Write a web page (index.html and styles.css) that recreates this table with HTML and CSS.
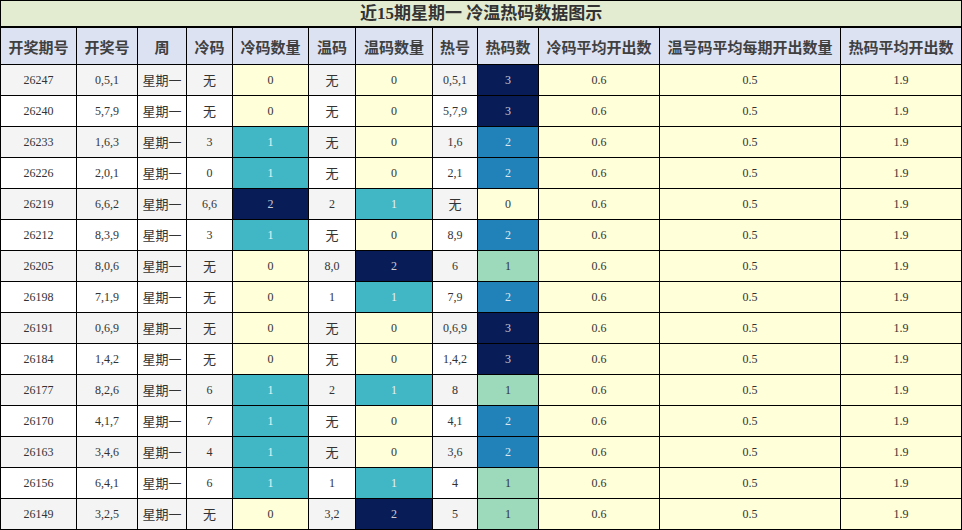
FILE: index.html
```html
<!DOCTYPE html>
<html lang="zh">
<head>
<meta charset="utf-8">
<title>近15期星期一 冷温热码数据图示</title>
<link rel="stylesheet" href="styles.css">
</head>
<body>
<table class="grid">
<colgroup>
<col class="c1"><col class="c2"><col class="c3"><col class="c4"><col class="c5"><col class="c6"><col class="c7"><col class="c8"><col class="c9"><col class="c10"><col class="c11"><col class="c12">
</colgroup>
<thead>
<tr class="title-row"><th colspan="12">近15期星期一 冷温热码数据图示</th></tr>
<tr class="head-row"><th>开奖期号</th><th>开奖号</th><th>周</th><th>冷码</th><th>冷码数量</th><th>温码</th><th>温码数量</th><th>热号</th><th>热码数</th><th>冷码平均开出数</th><th>温号码平均每期开出数量</th><th>热码平均开出数</th></tr>
</thead>
<tbody>
<tr class="odd"><td>26247</td><td>0,5,1</td><td class="cj">星期一</td><td class="cj">无</td><td class="y">0</td><td class="cj">无</td><td class="y">0</td><td>0,5,1</td><td class="n">3</td><td class="y">0.6</td><td class="y">0.5</td><td class="y">1.9</td></tr>
<tr><td>26240</td><td>5,7,9</td><td class="cj">星期一</td><td class="cj">无</td><td class="y">0</td><td class="cj">无</td><td class="y">0</td><td>5,7,9</td><td class="n">3</td><td class="y">0.6</td><td class="y">0.5</td><td class="y">1.9</td></tr>
<tr class="odd"><td>26233</td><td>1,6,3</td><td class="cj">星期一</td><td>3</td><td class="t">1</td><td class="cj">无</td><td class="y">0</td><td>1,6</td><td class="b">2</td><td class="y">0.6</td><td class="y">0.5</td><td class="y">1.9</td></tr>
<tr><td>26226</td><td>2,0,1</td><td class="cj">星期一</td><td>0</td><td class="t">1</td><td class="cj">无</td><td class="y">0</td><td>2,1</td><td class="b">2</td><td class="y">0.6</td><td class="y">0.5</td><td class="y">1.9</td></tr>
<tr class="odd"><td>26219</td><td>6,6,2</td><td class="cj">星期一</td><td>6,6</td><td class="n">2</td><td>2</td><td class="t">1</td><td class="cj">无</td><td class="y">0</td><td class="y">0.6</td><td class="y">0.5</td><td class="y">1.9</td></tr>
<tr><td>26212</td><td>8,3,9</td><td class="cj">星期一</td><td>3</td><td class="t">1</td><td class="cj">无</td><td class="y">0</td><td>8,9</td><td class="b">2</td><td class="y">0.6</td><td class="y">0.5</td><td class="y">1.9</td></tr>
<tr class="odd"><td>26205</td><td>8,0,6</td><td class="cj">星期一</td><td class="cj">无</td><td class="y">0</td><td>8,0</td><td class="n">2</td><td>6</td><td class="g">1</td><td class="y">0.6</td><td class="y">0.5</td><td class="y">1.9</td></tr>
<tr><td>26198</td><td>7,1,9</td><td class="cj">星期一</td><td class="cj">无</td><td class="y">0</td><td>1</td><td class="t">1</td><td>7,9</td><td class="b">2</td><td class="y">0.6</td><td class="y">0.5</td><td class="y">1.9</td></tr>
<tr class="odd"><td>26191</td><td>0,6,9</td><td class="cj">星期一</td><td class="cj">无</td><td class="y">0</td><td class="cj">无</td><td class="y">0</td><td>0,6,9</td><td class="n">3</td><td class="y">0.6</td><td class="y">0.5</td><td class="y">1.9</td></tr>
<tr><td>26184</td><td>1,4,2</td><td class="cj">星期一</td><td class="cj">无</td><td class="y">0</td><td class="cj">无</td><td class="y">0</td><td>1,4,2</td><td class="n">3</td><td class="y">0.6</td><td class="y">0.5</td><td class="y">1.9</td></tr>
<tr class="odd"><td>26177</td><td>8,2,6</td><td class="cj">星期一</td><td>6</td><td class="t">1</td><td>2</td><td class="t">1</td><td>8</td><td class="g">1</td><td class="y">0.6</td><td class="y">0.5</td><td class="y">1.9</td></tr>
<tr><td>26170</td><td>4,1,7</td><td class="cj">星期一</td><td>7</td><td class="t">1</td><td class="cj">无</td><td class="y">0</td><td>4,1</td><td class="b">2</td><td class="y">0.6</td><td class="y">0.5</td><td class="y">1.9</td></tr>
<tr class="odd"><td>26163</td><td>3,4,6</td><td class="cj">星期一</td><td>4</td><td class="t">1</td><td class="cj">无</td><td class="y">0</td><td>3,6</td><td class="b">2</td><td class="y">0.6</td><td class="y">0.5</td><td class="y">1.9</td></tr>
<tr><td>26156</td><td>6,4,1</td><td class="cj">星期一</td><td>6</td><td class="t">1</td><td>1</td><td class="t">1</td><td>4</td><td class="g">1</td><td class="y">0.6</td><td class="y">0.5</td><td class="y">1.9</td></tr>
<tr class="odd"><td>26149</td><td>3,2,5</td><td class="cj">星期一</td><td class="cj">无</td><td class="y">0</td><td>3,2</td><td class="n">2</td><td>5</td><td class="g">1</td><td class="y">0.6</td><td class="y">0.5</td><td class="y">1.9</td></tr>
</tbody>
</table>
</body>
</html>
```
FILE: styles.css
```css
html, body {
  margin: 0;
  padding: 0;
  background: #ffffff;
}
.grid {
  border-collapse: collapse;
  table-layout: fixed;
  width: 962px;
  font-family: "Liberation Serif", "Noto Sans CJK SC", serif;
  color: #333333;
}
.c1 { width: 76px; }
.c2 { width: 61px; }
.c3 { width: 49px; }
.c4 { width: 46px; }
.c5 { width: 76px; }
.c6 { width: 47px; }
.c7 { width: 77px; }
.c8 { width: 45px; }
.c9 { width: 61px; }
.c10 { width: 121px; }
.c11 { width: 181px; }
.c12 { width: 121px; }
.grid th, .grid td {
  border: 1px solid #000000;
  padding: 0;
  text-align: center;
  overflow: hidden;
  white-space: nowrap;
}
.title-row th {
  height: 25px;
  background: #e3ebd1;
  font-size: 17px;
  font-weight: bold;
  color: #333333;
  border-bottom-width: 2px;
  line-height: 25px;
}
.head-row th {
  height: 36px;
  background: #dce2f2;
  font-family: "Noto Sans CJK SC", sans-serif;
  font-size: 15px;
  font-weight: bold;
  color: #404040;
}
.grid td {
  height: 30px;
  font-size: 12px;
  line-height: 14px;
}
.grid td.cj {
  font-family: "Noto Sans CJK SC", sans-serif;
  font-size: 13px;
}
.odd td { background: #f4f4f4; }
.grid td.y { background: #ffffd9; }
.grid td.t { background: #41b6c4; color: #e6f4f6; }
.grid td.n { background: #081d58; color: #c8cbd6; }
.grid td.b { background: #2181b9; color: #dbe8f2; }
.grid td.g { background: #9dd9bb; color: #333333; }
```
